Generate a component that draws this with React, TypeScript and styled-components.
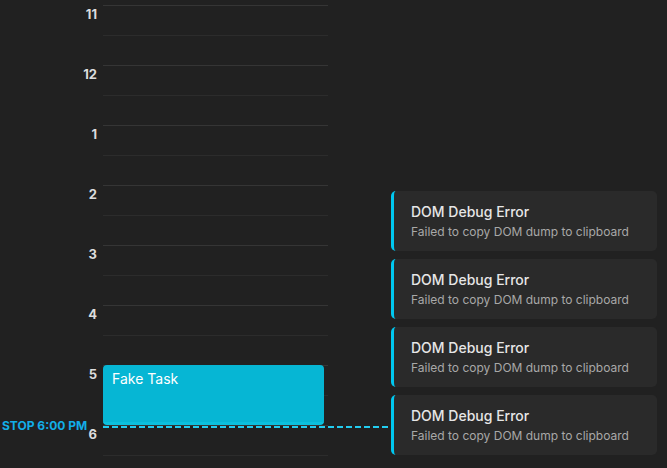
import React from 'react'
import styled, { createGlobalStyle } from 'styled-components'

const GlobalStyle = createGlobalStyle`
  html, body {
    margin: 0;
    padding: 0;
    background: #212121;
    overflow: hidden;
  }
  body {
    font-family: Inter, "Noto Sans", sans-serif;
  }
`

const HOURS = ['11', '12', '1', '2', '3', '4', '5', '6']
const HOUR_HEIGHT = 60

const Page = styled.div`
  position: relative;
  width: 667px;
  height: 468px;
  overflow: hidden;
  background: #212121;
`

const Timeline = styled.div`
  position: relative;
  display: flex;
  padding-top: 5px;
`

const Gutter = styled.div`
  width: 103px;
  display: flex;
  flex-direction: column;
`

const HourLabel = styled.div`
  height: ${HOUR_HEIGHT}px;
  padding: 2px 6px 0 0;
  box-sizing: border-box;
  text-align: right;
  font-size: 13px;
  font-weight: 700;
  color: #dcdcdc;
  line-height: 14px;
`

const Grid = styled.div`
  position: relative;
  width: 225px;
  display: flex;
  flex-direction: column;
`

const HourSlot = styled.div`
  height: ${HOUR_HEIGHT}px;
  box-sizing: border-box;
  border-top: 1px solid #353535;
  display: flex;
  flex-direction: column;
`

const HalfLine = styled.div`
  margin-top: 29px;
  border-top: 1px solid #2c2c2c;
`

const TaskBlock = styled.div<{ $top: number; $height: number }>`
  position: absolute;
  left: 0;
  right: 4px;
  top: ${({ $top }) => $top}px;
  height: ${({ $height }) => $height}px;
  box-sizing: border-box;
  background: #06b6d4;
  border-bottom: 3px solid #0bc0de;
  border-radius: 4px;
  padding: 5px 9px;
  color: #ffffff;
  font-size: 14px;
  font-weight: 400;
  line-height: 18px;
`

const StopLine = styled.div<{ $top: number }>`
  position: absolute;
  left: 103px;
  width: 285px;
  top: ${({ $top }) => $top}px;
  height: 2px;
  background: repeating-linear-gradient(
    90deg,
    #22cdf0 0 6px,
    transparent 6px 9px
  );
`

const StopLabel = styled.div<{ $top: number }>`
  position: absolute;
  left: 2px;
  top: ${({ $top }) => $top - 8}px;
  font-size: 12px;
  font-weight: 700;
  line-height: 16px;
  color: #12aee8;
  white-space: nowrap;
`

const ToastStack = styled.div`
  position: absolute;
  right: 10px;
  bottom: 13px;
  width: 266px;
  display: flex;
  flex-direction: column;
  gap: 8px;
`

const Toast = styled.div`
  height: 60px;
  box-sizing: border-box;
  background: #2a2a2a;
  border-left: 3px solid #00c8f0;
  border-radius: 5px;
  padding: 12px 10px 0 17px;
  display: flex;
  flex-direction: column;
  gap: 4px;
`

const ToastTitle = styled.div`
  font-size: 14px;
  font-weight: 500;
  line-height: 17px;
  color: #e6e6e6;
`

const ToastText = styled.div`
  font-size: 12px;
  line-height: 15px;
  color: #a8a8a8;
  white-space: nowrap;
`

export default function App() {
  const taskTop = 6 * HOUR_HEIGHT
  const stopTop = 7 * HOUR_HEIGHT + 5 + 1
  return (
    <>
      <GlobalStyle />
      <Page>
        <Timeline>
          <Gutter>
            {HOURS.map((h) => (
              <HourLabel key={h}>{h}</HourLabel>
            ))}
          </Gutter>
          <Grid>
            {HOURS.map((h) => (
              <HourSlot key={h}>
                <HalfLine />
              </HourSlot>
            ))}
            <TaskBlock $top={taskTop} $height={HOUR_HEIGHT}>
              Fake Task
            </TaskBlock>
          </Grid>
        </Timeline>
        <StopLine $top={stopTop} />
        <StopLabel $top={stopTop}>STOP 6:00 PM</StopLabel>
        <ToastStack>
          {[0, 1, 2, 3].map((i) => (
            <Toast key={i}>
              <ToastTitle>DOM Debug Error</ToastTitle>
              <ToastText>Failed to copy DOM dump to clipboard</ToastText>
            </Toast>
          ))}
        </ToastStack>
      </Page>
    </>
  )
}
